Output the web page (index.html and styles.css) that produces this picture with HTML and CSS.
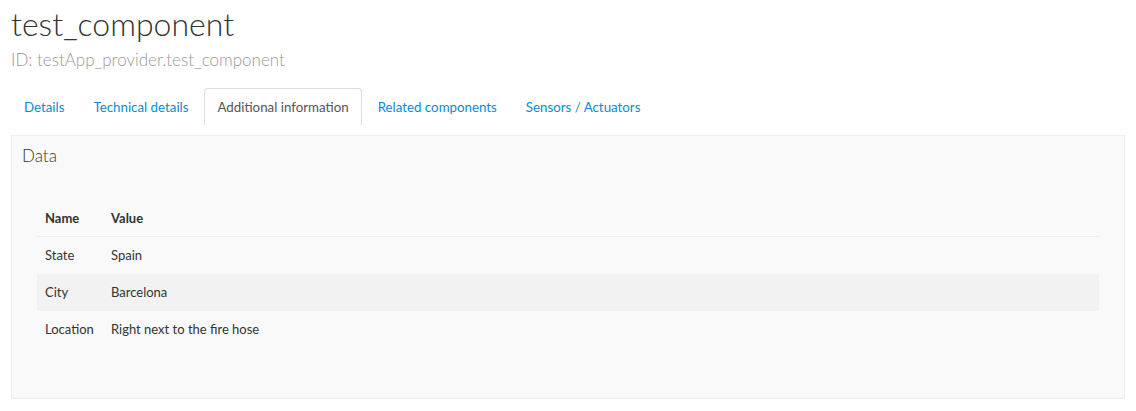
FILE: index.html
```html
<!DOCTYPE html>
<html lang="en">
<head>
    <meta charset="UTF-8">
    <title>test_component</title>
    <link rel="stylesheet" href="styles.css">
</head>
<body>
<div class="page">
    <h1 class="title">test_component</h1>
    <div class="subtitle">ID: testApp_provider.test_component</div>

    <ul class="tabs">
        <li class="tab"><a href="#">Details</a></li>
        <li class="tab"><a href="#">Technical details</a></li>
        <li class="tab active"><a href="#">Additional information</a></li>
        <li class="tab"><a href="#">Related components</a></li>
        <li class="tab"><a href="#">Sensors / Actuators</a></li>
    </ul>

    <div class="panel">
        <h3 class="panel-title">Data</h3>
        <div class="panel-body">
            <table class="data-table">
                <thead>
                <tr>
                    <th class="col-name">Name</th>
                    <th>Value</th>
                </tr>
                </thead>
                <tbody>
                <tr>
                    <td>State</td>
                    <td>Spain</td>
                </tr>
                <tr>
                    <td>City</td>
                    <td>Barcelona</td>
                </tr>
                <tr>
                    <td>Location</td>
                    <td>Right next to the fire hose</td>
                </tr>
                </tbody>
            </table>
        </div>
    </div>
</div>
</body>
</html>
```

FILE: styles.css
```css
html, body {
    margin: 0;
    padding: 0;
    background: #fff;
}

body {
    font-family: Lato, "Open Sans", sans-serif;
    font-size: 14px;
    line-height: 20px;
    color: #333;
}

.page {
    padding: 0 11px;
}

.title {
    margin: 0;
    padding-top: 4px;
    font-size: 32px;
    line-height: 40px;
    font-weight: 300;
    color: #333;
}

.subtitle {
    margin-top: 4px;
    font-size: 17px;
    line-height: 24px;
    font-weight: 300;
    color: #999;
}

.tabs {
    display: flex;
    list-style: none;
    margin: 16px 0 0;
    padding: 0;
}

.tab {
    margin-right: 3px;
}

.tab a {
    display: block;
    padding: 8px 12px;
    border: 1px solid transparent;
    border-bottom: 0;
    border-radius: 4px 4px 0 0;
    font-size: 13.3px;
    color: #0c8bd0;
    text-decoration: none;
}

.tab.active a {
    border-color: #ddd;
    color: #555;
    background: #fff;
}

.panel {
    margin-top: 10px;
    padding: 10px;
    border: 1px solid #eee;
    background: #f9f9f9;
    height: 242px;
}

.panel-title {
    margin: 0;
    font-size: 17px;
    line-height: 20px;
    font-weight: 300;
    color: #333;
}

.panel-body {
    padding: 34px 15px 0;
}

.data-table {
    width: 100%;
    border-collapse: collapse;
}

.data-table th,
.data-table td {
    text-align: left;
    padding: 8px;
    font-size: 13px;
    line-height: 20px;
}

.data-table th {
    font-weight: 700;
    border-bottom: 1px solid #eeeeee;
}

.data-table td {
    border-bottom: 1px solid transparent;
}

.data-table .col-name {
    width: 50px;
}

.data-table tbody tr:nth-child(even) {
    background: #f2f2f2;
}
```
